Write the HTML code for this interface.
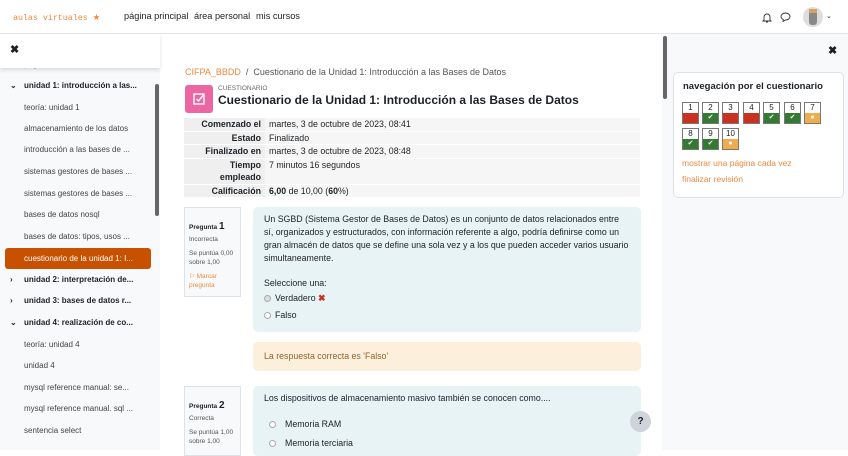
<!DOCTYPE html>
<html><head><meta charset="utf-8"><style>
*{box-sizing:border-box;margin:0;padding:0}
body{width:848px;height:450px;overflow:hidden;font-family:"Liberation Sans",sans-serif;color:#1d2125;background:#fff;position:relative}
.hdr{position:absolute;left:0;top:0;width:848px;height:34px;background:#fff;border-bottom:1px solid #e6e6e6;z-index:5}
.logo{position:absolute;left:13px;top:12px;font-family:"Liberation Mono",monospace;font-size:8.3px;color:#f0883e}
.nav{position:absolute;top:11px;font-size:9.2px;color:#1d2125;white-space:nowrap}
.side{position:absolute;left:0;top:34px;width:160px;height:416px;background:#f8f9fa}
.sidetop{position:absolute;left:0;top:34px;width:160px;height:34px;background:#fff;box-shadow:0 2px 4px rgba(0,0,0,.12);z-index:3}
.si{position:absolute;left:24px;font-size:8px;color:#444;white-space:nowrap}
.sb{position:absolute;left:24px;font-size:8px;font-weight:bold;color:#1d2125;white-space:nowrap}
.chev{position:absolute;left:10px;font-size:8px;font-weight:bold}
.act{position:absolute;left:5px;top:248px;width:146px;height:21px;background:#c85100;border-radius:3px}
.right{position:absolute;left:662px;top:34px;width:186px;height:416px;background:#f8f9fa}
.card{position:absolute;left:673px;top:72px;width:171px;height:126px;background:#fff;border:1px solid #dee2e6;border-radius:5px}
.qb{position:absolute;width:17px;height:22px;border:1px solid #777;background:#fff;font-size:8px;text-align:center;line-height:10px}
.qb i{position:absolute;left:0;right:0;bottom:0;height:10px;font-style:normal;color:#fff;font-size:7px;line-height:10px}
.r{background:#ca3120}.g{background:#357a32}.o{background:#f0ad4e}
table{position:absolute;left:184px;top:117px;width:456px;border-collapse:collapse;font-size:8.8px}
td{padding:0 4px;border-top:1px solid #fff;background:#f6f6f6;vertical-align:top;line-height:12.5px}
td.l{width:81px;text-align:right;font-weight:bold;background:#efefef}
.info{position:absolute;left:184px;width:57px;background:#f8f9fa;border:1px solid #dee2e6;padding:4px;font-size:6.5px;color:#555;line-height:9px}
.qc{position:absolute;left:253px;width:388px;background:#e7f3f5;border-radius:5px;padding:6px 11px;font-size:8.8px;line-height:13px;color:#1d2125}
.rad{display:inline-block;width:7px;height:7px;border:1px solid #aaa;border-radius:50%;background:#fff;vertical-align:middle;margin-right:4px}
</style></head><body>
<div class="hdr">
<div class="logo">aulas virtuales <span>★</span></div>
<div class="nav" style="left:124px">página principal</div>
<div class="nav" style="left:194px">área personal</div>
<div class="nav" style="left:256px">mis cursos</div>
<svg style="position:absolute;left:762px;top:12px" width="10" height="11" viewBox="0 0 10 11"><path d="M2 8V5a3 3 0 0 1 6 0v3l1 1H1z M4 10h2" fill="none" stroke="#333" stroke-width=".9"/></svg>
<svg style="position:absolute;left:780px;top:12px" width="11" height="10" viewBox="0 0 11 10"><path d="M5.5 1C8 1 10 2.5 10 4.5S8 8 5.5 8L3 9.5 3.3 7.5C1.8 6.8 1 5.7 1 4.5 1 2.5 3 1 5.5 1z" fill="none" stroke="#333" stroke-width=".9"/></svg>
<div style="position:absolute;left:803px;top:7px;width:20px;height:20px;border-radius:50%;background:#ddd;overflow:hidden"><div style="position:absolute;left:6px;top:3px;width:8px;height:15px;background:#888;border-radius:3px"></div><div style="position:absolute;left:6px;top:2px;width:8px;height:4px;background:#d9a060"></div></div>
<div style="position:absolute;left:826px;top:12px;font-size:7px">⌄</div>
</div>
<div class="side"></div>
<div class="sidetop"><div style="position:absolute;left:10px;top:9px;font-size:11px;font-weight:bold">✖</div></div>
<div class="si" style="top:60px;color:#999">pág</div>
<div class="chev" style="top:81px">⌄</div><div class="sb" style="top:81px">unidad 1: introducción a las...</div>
<div class="si" style="top:103px">teoría: unidad 1</div>
<div class="si" style="top:124px">almacenamiento de los datos</div>
<div class="si" style="top:145px">introducción a las bases de ...</div>
<div class="si" style="top:167px">sistemas gestores de bases ...</div>
<div class="si" style="top:189px">sistemas gestores de bases ...</div>
<div class="si" style="top:210px">bases de datos nosql</div>
<div class="si" style="top:232px">bases de datos: tipos, usos ...</div>
<div class="act"></div><div class="si" style="top:254px;color:#fff">cuestionario de la unidad 1: I...</div>
<div class="chev" style="top:275px">›</div><div class="sb" style="top:275px">unidad 2: interpretación de...</div>
<div class="chev" style="top:296px">›</div><div class="sb" style="top:296px">unidad 3: bases de datos r...</div>
<div class="chev" style="top:318px">⌄</div><div class="sb" style="top:318px">unidad 4: realización de co...</div>
<div class="si" style="top:340px">teoría: unidad 4</div>
<div class="si" style="top:361px">unidad 4</div>
<div class="si" style="top:383px">mysql reference manual: se...</div>
<div class="si" style="top:404px">mysql reference manual. sql ...</div>
<div class="si" style="top:426px">sentencia select</div>
<div style="position:absolute;left:155px;top:84px;width:4px;height:132px;background:#666;border-radius:2px"></div>

<div style="position:absolute;left:185px;top:67px;font-size:9px;color:#555"><span style="color:#f0883e">CIFPA_BBDD</span> &nbsp;/&nbsp; Cuestionario de la Unidad 1: Introducción a las Bases de Datos</div>
<div style="position:absolute;left:185px;top:85px;width:28px;height:28px;background:#eb66a2;border-radius:3px"><svg width="28" height="28" viewBox="0 0 28 28"><rect x="9" y="9" width="10" height="10" fill="none" stroke="#fff" stroke-width="1.4"/><path d="M11.5 14l2 2 5-6" fill="none" stroke="#fff" stroke-width="1.4"/></svg></div>
<div style="position:absolute;left:218px;top:85px;font-size:6.5px;color:#666">CUESTIONARIO</div>
<div style="position:absolute;left:218px;top:93px;font-size:12px;font-weight:bold">Cuestionario de la Unidad 1: Introducción a las Bases de Datos</div>
<table>
<tr><td class="l">Comenzado el</td><td>martes, 3 de octubre de 2023, 08:41</td></tr>
<tr><td class="l">Estado</td><td>Finalizado</td></tr>
<tr><td class="l">Finalizado en</td><td>martes, 3 de octubre de 2023, 08:48</td></tr>
<tr><td class="l">Tiempo empleado</td><td>7 minutos 16 segundos</td></tr>
<tr><td class="l">Calificación</td><td><b>6,00</b> de 10,00 (<b>60</b>%)</td></tr>
</table>

<div class="info" style="top:207px;height:90px"><div style="margin-top:10px;color:#1d2125;font-weight:bold;font-size:6.5px">Pregunta <span style="font-size:10px">1</span></div><div style="margin-top:3px">Incorrecta</div><div style="margin-top:5px">Se puntúa 0,00 sobre 1,00</div><div style="margin-top:5px;color:#f0883e">⚐ Marcar pregunta</div></div>
<div class="qc" style="top:207px;height:125px">Un SGBD (Sistema Gestor de Bases de Datos) es un conjunto de datos relacionados entre sí, organizados y estructurados, con información referente a algo, podría definirse como un gran almacén de datos que se define una sola vez y a los que pueden acceder varios usuario simultaneamente.<div style="margin-top:12px">Seleccione una:</div><div style="margin-top:2px"><span class="rad" style="background:#ddd"></span>Verdadero <span style="color:#ca3120;font-weight:bold">✖</span></div><div style="margin-top:4px"><span class="rad"></span>Falso</div></div>
<div class="qc" style="top:342px;height:29px;background:#fcefdc;color:#8e662e;padding-top:8px">La respuesta correcta es 'Falso'</div>
<div class="info" style="top:386px;height:70px"><div style="margin-top:10px;color:#1d2125;font-weight:bold;font-size:6.5px">Pregunta <span style="font-size:10px">2</span></div><div style="margin-top:3px">Correcta</div><div style="margin-top:5px">Se puntúa 1,00 sobre 1,00</div></div>
<div class="qc" style="top:386px;height:70px">Los dispositivos de almacenamiento masivo también se conocen como....<div style="margin-top:13px;padding-left:5px"><span class="rad" style="margin-right:9px"></span>Memoria RAM</div><div style="margin-top:6px;padding-left:5px"><span class="rad" style="margin-right:9px"></span>Memoria terciaria</div></div>
<div style="position:absolute;left:630px;top:411px;width:21px;height:21px;border-radius:50%;background:#ced4da;text-align:center;font-size:10px;font-weight:bold;line-height:21px">?</div>

<div class="right"></div>
<div style="position:absolute;left:663px;top:36px;width:4px;height:63px;background:#666;border-radius:2px"></div>
<div style="position:absolute;left:828px;top:44px;font-size:11px;font-weight:bold">✖</div>
<div class="card">
<div style="position:absolute;left:9px;top:8px;font-size:9.5px;font-weight:bold">navegación por el cuestionario</div>
</div>
<div class="qb" style="left:682px;top:102px">1<i class="r"></i></div>
<div class="qb" style="left:702px;top:102px">2<i class="g">✔</i></div>
<div class="qb" style="left:722px;top:102px">3<i class="r"></i></div>
<div class="qb" style="left:743px;top:102px">4<i class="r"></i></div>
<div class="qb" style="left:763px;top:102px">5<i class="g">✔</i></div>
<div class="qb" style="left:784px;top:102px">6<i class="g">✔</i></div>
<div class="qb" style="left:804px;top:102px">7<i class="o">●</i></div>
<div class="qb" style="left:682px;top:128px">8<i class="g">✔</i></div>
<div class="qb" style="left:702px;top:128px">9<i class="g">✔</i></div>
<div class="qb" style="left:722px;top:128px">10<i class="o">●</i></div>
<div style="position:absolute;left:682px;top:158px;font-size:8.5px;color:#f0883e">mostrar una página cada vez</div>
<div style="position:absolute;left:682px;top:174px;font-size:8.5px;color:#f0883e">finalizar revisión</div>
</body></html>
